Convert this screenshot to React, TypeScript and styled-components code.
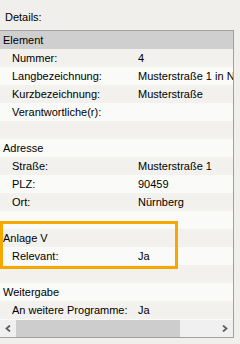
import React from "react";
import styled, { createGlobalStyle } from "styled-components";

const Global = createGlobalStyle`
  html, body { margin: 0; padding: 0; }
  body { background: #f0efeb; }
  * { box-sizing: border-box; }
`;

const Page = styled.div`
  position: relative;
  width: 240px;
  height: 344px;
  background: #f0efeb;
  font-family: "Liberation Sans", Arial, sans-serif;
  font-size: 11px;
  color: #000;
  overflow: hidden;
`;

const Title = styled.div`
  height: 30px;
  padding: 8px 0 0 5px;
  line-height: 18px;
`;

const Grid = styled.div`
  width: 234px;
  border-top: 1px solid #a0a0a0;
  border-right: 1px solid #a0a0a0;
  border-bottom: 1px solid #a0a0a0;
  background: #fafaf8;
  overflow: hidden;
`;

const Row = styled.div<{ $index: number; $selected?: boolean }>`
  display: grid;
  grid-template-columns: 138px 1fr;
  height: 18px;
  line-height: 18px;
  white-space: nowrap;
  background: ${(p) =>
    p.$selected ? "#cfcfcf" : p.$index % 2 === 1 ? "#f2f1ed" : "#fafaf8"};
`;

const Category = styled.div`
  grid-column: 1 / span 2;
  padding-left: 3px;
`;

const Label = styled.div`
  padding-left: 12px;
  overflow: hidden;
`;

const Value = styled.div`
  overflow: hidden;
`;

const HScroll = styled.div`
  display: flex;
  height: 18px;
  border-top: 1px solid #fafaf8;
  background: #f0f0f0;
`;

const ArrowButton = styled.div<{ $width: number }>`
  width: ${(p) => p.$width}px;
  flex: none;
  display: flex;
  align-items: center;
  justify-content: center;
`;

const Thumb = styled.div`
  width: 164px;
  flex: none;
  background: #cdcdcd;
`;

const Track = styled.div`
  flex: 1;
`;

const Highlight = styled.div`
  position: absolute;
  left: 0;
  top: 221px;
  width: 178px;
  height: 48px;
  border: 3px solid #f6a800;
  pointer-events: none;
`;

type Item =
  | { type: "cat"; text: string; selected?: boolean }
  | { type: "prop"; label: string; value: string }
  | { type: "blank" };

const items: Item[] = [
  { type: "cat", text: "Element", selected: true },
  { type: "prop", label: "Nummer:", value: "4" },
  { type: "prop", label: "Langbezeichnung:", value: "Musterstraße 1 in Nürnberg" },
  { type: "prop", label: "Kurzbezeichnung:", value: "Musterstraße" },
  { type: "prop", label: "Verantwortliche(r):", value: "" },
  { type: "blank" },
  { type: "cat", text: "Adresse" },
  { type: "prop", label: "Straße:", value: "Musterstraße 1" },
  { type: "prop", label: "PLZ:", value: "90459" },
  { type: "prop", label: "Ort:", value: "Nürnberg" },
  { type: "blank" },
  { type: "cat", text: "Anlage V" },
  { type: "prop", label: "Relevant:", value: "Ja" },
  { type: "blank" },
  { type: "cat", text: "Weitergabe" },
  { type: "prop", label: "An weitere Programme:", value: "Ja" },
];

const Chevron = ({ dir }: { dir: "left" | "right" }) => (
  <svg width="6" height="7" viewBox="0 0 6 7">
    <path
      d={dir === "left" ? "M5 0.5 L1.5 3.5 L5 6.5" : "M1 0.5 L4.5 3.5 L1 6.5"}
      fill="none"
      stroke="#606060"
      strokeWidth="1.8"
    />
  </svg>
);

export default function App() {
  return (
    <Page>
      <Global />
      <Title>Details:</Title>
      <Grid>
        {items.map((it, i) => (
          <Row key={i} $index={i} $selected={it.type === "cat" && it.selected}>
            {it.type === "cat" && <Category>{it.text}</Category>}
            {it.type === "prop" && (
              <>
                <Label>{it.label}</Label>
                <Value>{it.value}</Value>
              </>
            )}
          </Row>
        ))}
        <HScroll>
          <ArrowButton $width={16}>
            <Chevron dir="left" />
          </ArrowButton>
          <Thumb />
          <Track />
          <ArrowButton $width={17}>
            <Chevron dir="right" />
          </ArrowButton>
        </HScroll>
      </Grid>
      <Highlight />
    </Page>
  );
}
